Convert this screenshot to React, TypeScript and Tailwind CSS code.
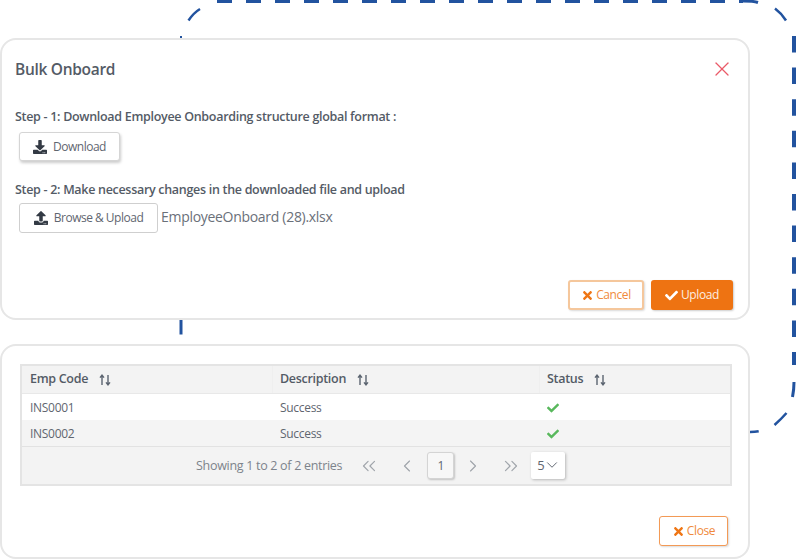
import React from 'react';
import { FaCheck, FaDownload, FaTimes, FaUpload } from 'react-icons/fa';
import { ChevronDown, ChevronLeft, ChevronRight, ChevronsLeft, ChevronsRight, X } from 'lucide-react';

const SortIcon = () => (
  <svg width="12" height="12" viewBox="0 0 12 12" fill="none" stroke="#5b6470" strokeWidth="1.4" className="ml-[11px] shrink-0">
    <path d="M3 11V1.5M1 3.6 3 1.2l2 2.4" />
    <path d="M9 1v9.5M7 8.4l2 2.4 2-2.4" />
  </svg>
);

const columns = [
  { name: 'Emp Code', width: 'w-[250px] pl-[8px]' },
  { name: 'Description', width: 'w-[267px] pl-[7px] border-l border-[#efefef]' },
  { name: 'Status', width: 'flex-1 pl-[7px] border-l border-[#efefef]' },
];

const rows = [
  { code: 'INS0001', bg: 'bg-white' },
  { code: 'INS0002', bg: 'bg-[#f4f4f4]' },
];

export default function App() {
  return (
    <div className="relative w-[796px] h-[560px] bg-white overflow-hidden font-['Open_Sans',sans-serif] text-[#5f6670] tracking-[-0.3px]">
      {/* Dashed connector behind the cards */}
      <svg width="796" height="560" viewBox="0 0 796 560" fill="none" stroke="#22539f" className="absolute inset-0">
        <path d="M217 1H743" strokeWidth="4" strokeDasharray="15 14" />
        <path d="M743 1C750 1 755 1.500 758 2.500" strokeWidth="3" />
        <path d="M188.500 20.500C191.500 16 195 12 200 9" strokeWidth="2.500" />
        <path d="M181 36V39" strokeWidth="2" />
        <path d="M181 320V334.500" strokeWidth="3" />
        <path d="M775 8.500C779 11.500 783 15.500 786 20.500" strokeWidth="2.500" />
        <path d="M794 36V365" strokeWidth="4" strokeDasharray="16.500 15.100" />
        <path d="M794 382C794 388 793.500 392 792.500 397" strokeWidth="3" />
        <path d="M774.500 425C779 421 783 417 786.500 413" strokeWidth="2.500" />
        <path d="M750 432C753 432 756 431.800 758.700 431.300" strokeWidth="2.500" />
      </svg>

      <div className="relative flex flex-col w-[750px] pt-[38px] gap-[24px]">
        {/* Upload dialog */}
        <section className="h-[282px] rounded-[16px] border-2 border-[#e6e6e6] bg-white pl-[13px] pr-[15px] flex flex-col">
          <div className="flex items-center justify-between pt-[10px] h-[48px]">
            <h2 className="text-[15.500px] font-semibold leading-[24px] text-[#545b66]">Bulk Onboard</h2>
            <X size={24} strokeWidth={1.3} className="text-[#ea5a68] -mr-[1px]" />
          </div>
          <p className="mt-[20px] text-[12.500px] font-semibold leading-[18px] text-[#545b66]">
            Step - 1: Download Employee Onboarding structure global format :
          </p>
          <button className="mt-[6px] ml-[4px] flex items-center justify-center gap-[6px] w-[101px] h-[29px] rounded-[3px] border border-[#d5d5d5] bg-white text-[12px] tracking-[-0.5px] shadow-[1px_2px_3px_rgba(0,0,0,0.2)]">
            <FaDownload size={14} className="text-[#333a44]" />
            Download
          </button>
          <p className="mt-[20px] text-[12.500px] font-semibold leading-[18px] text-[#545b66]">
            Step - 2: Make necessary changes in the downloaded file and upload
          </p>
          <div className="mt-[4px] ml-[4px] flex items-start gap-[3px]">
            <button className="flex items-center justify-center gap-[6px] w-[139px] h-[30px] rounded-[3px] border border-[#cfcfcf] bg-white text-[12px] tracking-[-0.5px]">
              <FaUpload size={14} className="text-[#333a44]" />
              Browse &amp; Upload
            </button>
            <span className="text-[14px] leading-[28px] text-[#6a7079]">EmployeeOnboard (28).xlsx</span>
          </div>
          <div className="mt-auto mb-[8px] flex justify-end gap-[7px]">
            <button className="flex items-center justify-center gap-[2px] w-[76px] h-[30px] rounded-[3px] border-2 border-[#f5c79c] bg-white text-[12px] tracking-[-0.4px] text-[#f08a3c] shadow-[1px_1px_2px_rgba(0,0,0,0.15)]">
              <FaTimes size={13} className="text-[#ef7615]" />
              Cancel
            </button>
            <button className="flex items-center justify-center gap-[3px] w-[82px] h-[30px] rounded-[3px] bg-[#ee7312] text-[12px] tracking-[-0.4px] text-[#fdeee0] shadow-[1px_1px_2px_rgba(0,0,0,0.2)]">
              <FaCheck size={13} className="text-white" />
              Upload
            </button>
          </div>
        </section>

        {/* Results table */}
        <section className="h-[215px] rounded-[16px] border-2 border-[#e6e6e6] bg-white pt-[18px] pl-[18px] pr-[16px] flex flex-col">
          <div className="border-2 border-[#e4e4e4] bg-[#f3f3f3]">
            <div className="flex h-[28px] items-center border-b border-[#e8e8e8]">
              {columns.map((c) => (
                <div key={c.name} className={`${c.width} flex items-center h-full text-[12.500px] font-semibold text-[#545b66]`}>
                  {c.name}
                  <SortIcon />
                </div>
              ))}
            </div>
            {rows.map((r) => (
              <div key={r.code} className={`flex h-[26px] items-center pt-[1px] text-[12px] ${r.bg}`}>
                <div className="w-[250px] pl-[8px]">{r.code}</div>
                <div className="w-[267px] pl-[8px]">Success</div>
                <div className="flex-1 pl-[8px]">
                  <FaCheck size={12} className="text-[#58b85c]" />
                </div>
              </div>
            ))}
            <div className="flex h-[38px] items-center border-t border-[#e2e2e2] pl-[174px] text-[12px] text-[#7d838b]">
              <span className="text-[12.500px] pt-[1px]">Showing 1 to 2 of 2 entries</span>
              <ChevronsLeft size={22} strokeWidth={1.3} className="ml-[16px] text-[#a0a5ab]" />
              <ChevronLeft size={20} strokeWidth={1.4} className="ml-[17px] text-[#a0a5ab]" />
              <div className="ml-[10px] flex items-center justify-center w-[27px] h-[27px] rounded-[3px] border border-[#d4d4d4] bg-[#f7f7f7] text-[#5f6670] shadow-[1px_1px_2px_rgba(0,0,0,0.2)]">1</div>
              <ChevronRight size={20} strokeWidth={1.4} className="ml-[9px] text-[#a0a5ab]" />
              <ChevronsRight size={22} strokeWidth={1.3} className="ml-[17px] text-[#a0a5ab]" />
              <div className="ml-[9px] flex items-center w-[34px] h-[27px] pl-[6px] rounded-[2px] bg-white text-[13px] text-[#5f6670] shadow-[1px_1px_3px_rgba(0,0,0,0.25)]">
                5
                <ChevronDown size={18} strokeWidth={1.3} className="-ml-[1px] -mt-[2px]" />
              </div>
            </div>
          </div>
          <div className="mt-[30px] flex justify-end pr-[4px]">
            <button className="flex items-center justify-center gap-[2px] w-[69px] h-[30px] rounded-[3px] border border-[#f39a56] bg-white text-[12px] tracking-[-0.4px] text-[#f08a3c] shadow-[1px_1px_2px_rgba(0,0,0,0.15)]">
              <FaTimes size={13} className="text-[#ef7615]" />
              Close
            </button>
          </div>
        </section>
      </div>
    </div>
  );
}
